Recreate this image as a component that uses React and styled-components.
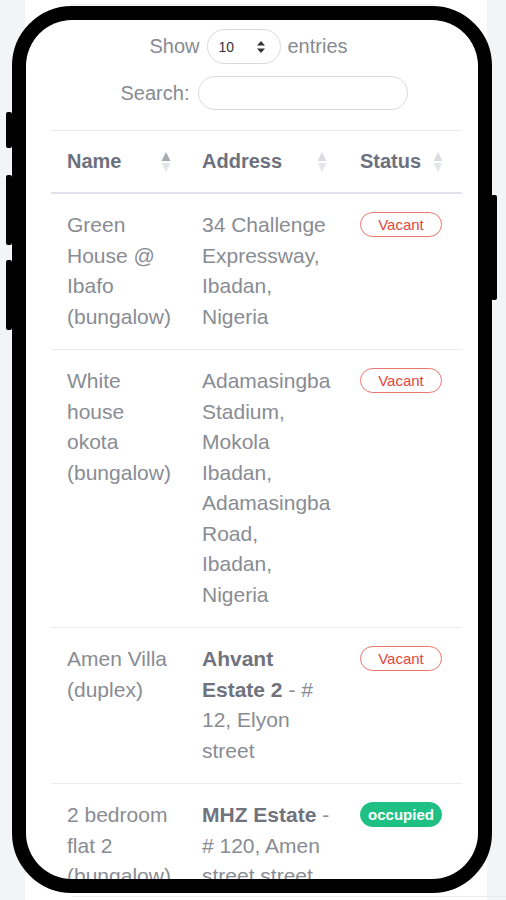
import styled, { createGlobalStyle } from "styled-components";

const GlobalStyle = createGlobalStyle`
  html, body {
    margin: 0;
    padding: 0;
    background: #f3f4f6;
    font-family: "Liberation Sans", Arial, sans-serif;
  }
`;

const rows = [
  {
    name: "Green House @ Ibafo (bungalow)",
    estate: null,
    address: "34 Challenge Expressway, Ibadan, Nigeria",
    status: "vacant",
  },
  {
    name: "White house okota (bungalow)",
    estate: null,
    address: "Adamasingba Stadium, Mokola Ibadan, Adamasingba Road, Ibadan, Nigeria",
    status: "vacant",
  },
  {
    name: "Amen Villa (duplex)",
    estate: "Ahvant Estate 2",
    address: " - # 12, Elyon street",
    status: "vacant",
  },
  {
    name: "2 bedroom flat 2 (bungalow)",
    estate: "MHZ Estate",
    address: " - # 120, Amen street street",
    status: "occupied",
  },
];

function SortIcon({ active }) {
  return (
    <SortSvg width="10" height="22" viewBox="0 0 10 22">
      <path d="M5 1 L9.5 10 L0.5 10 Z" fill={active ? "#a8aab1" : "#dcdde1"} />
      <path d="M5 21 L9.5 12 L0.5 12 Z" fill="#e4e5e8" />
    </SortSvg>
  );
}

export default function App() {
  return (
    <>
      <GlobalStyle />
      <Stage>
        <TopCard />
        <PhoneFrame>
          <SideButton $side="left" $top={92} $h={36} />
          <SideButton $side="left" $top={155} $h={70} />
          <SideButton $side="left" $top={240} $h={70} />
          <SideButton $side="right" $top={175} $h={105} />
          <Screen>
            <Controls>
              <ControlRow $shift={-16}>
                Show
                <SelectBox>
                  10
                  <svg width="10" height="14" viewBox="0 0 10 14">
                    <path d="M5 1 L9 5.5 L1 5.5 Z" fill="#333" />
                    <path d="M5 13 L9 8.5 L1 8.5 Z" fill="#333" />
                  </svg>
                </SelectBox>
                entries
              </ControlRow>
              <ControlRow $shift={16}>
                Search:
                <SearchInput />
              </ControlRow>
            </Controls>
            <Table>
              <colgroup>
                <col style={{ width: 135 }} />
                <col style={{ width: 158 }} />
                <col style={{ width: 118 }} />
              </colgroup>
              <thead>
                <tr>
                  <Th $pr={15}>
                    <HeadInner>
                      Name
                      <SortIcon active />
                    </HeadInner>
                  </Th>
                  <Th $pr={17}>
                    <HeadInner>
                      Address
                      <SortIcon />
                    </HeadInner>
                  </Th>
                  <Th $pr={19}>
                    <HeadInner>
                      Status
                      <SortIcon />
                    </HeadInner>
                  </Th>
                </tr>
              </thead>
              <tbody>
                {rows.map((r) => (
                  <Row key={r.name}>
                    <Td $pr={12}>{r.name}</Td>
                    <Td $pr={13}>
                      {r.estate && <Estate>{r.estate}</Estate>}
                      {r.address}
                    </Td>
                    <Td $pr={8}>
                      <Badge $status={r.status}>
                        {r.status === "vacant" ? "Vacant" : "occupied"}
                      </Badge>
                    </Td>
                  </Row>
                ))}
              </tbody>
            </Table>
          </Screen>
        </PhoneFrame>
        <BottomCard />
      </Stage>
    </>
  );
}

const Stage = styled.div`
  height: 900px;
  overflow: hidden;
  background: linear-gradient(
    to right,
    #f3f4f6 25px,
    #ffffff 25px,
    #ffffff 487px,
    #f3f4f6 487px
  );
`;

const TopCard = styled.div`
  height: 4px;
  margin: 0 71px 0 70px;
  background: #fff;
  border-bottom: 1px solid #ececef;
  box-shadow: 0 1px 2px rgba(0, 0, 0, 0.04);
`;

const PhoneFrame = styled.div`
  position: relative;
  box-sizing: border-box;
  width: 480px;
  height: 887px;
  margin: 1px 0 0 12px;
  border: 14px solid #000;
  border-radius: 60px;
  background: #000;
`;

const SideButton = styled.div`
  position: absolute;
  top: ${(p) => p.$top}px;
  ${(p) => (p.$side === "left" ? "left: -20px;" : "right: -19px;")}
  width: 6px;
  height: ${(p) => p.$h}px;
  background: #000;
  border-radius: 2px;
`;

const Screen = styled.div`
  height: 100%;
  overflow: hidden;
  background: #fff;
  border-radius: 46px;
  padding: 0 16px 0 25px;
`;

const Controls = styled.div`
  display: flex;
  flex-direction: column;
  gap: 12px;
  padding-top: 9px;
`;

const ControlRow = styled.div`
  display: flex;
  align-items: center;
  justify-content: center;
  gap: 7px;
  font-size: 20px;
  color: #878a91;
  padding-left: ${(p) => Math.max(p.$shift, 0)}px;
  padding-right: ${(p) => Math.max(-p.$shift, 0)}px;
`;

const SelectBox = styled.div`
  box-sizing: border-box;
  display: flex;
  align-items: center;
  justify-content: space-between;
  width: 74px;
  height: 35px;
  padding: 0 14px 0 11px;
  border: 1px solid #d9dadf;
  border-radius: 18px;
  font-size: 14px;
  color: #333;
`;

const SearchInput = styled.div`
  box-sizing: border-box;
  width: 210px;
  height: 34px;
  margin-left: 2px;
  border: 1px solid #d9dadf;
  border-radius: 17px;
`;

const Table = styled.table`
  width: 411px;
  margin-top: 20px;
  border-collapse: collapse;
  table-layout: fixed;
  border-top: 1px solid #e9e9ee;
`;

const Th = styled.th`
  height: 61px;
  padding: 0 ${(p) => p.$pr}px 0 16px;
  text-align: left;
  font-size: 20px;
  font-weight: 700;
  color: #6d717e;
  border-bottom: 2px solid #e1e1ee;
`;

const HeadInner = styled.div`
  display: flex;
  align-items: center;
  justify-content: space-between;
`;

const SortSvg = styled.svg`
  flex-shrink: 0;
`;

const Row = styled.tr`
  border-bottom: 1px solid #ebebef;
`;

const Td = styled.td`
  padding: 16px ${(p) => p.$pr}px 17px 16px;
  vertical-align: top;
  font-size: 21px;
  line-height: 30.5px;
  color: #898c93;
`;

const Estate = styled.span`
  font-weight: 700;
  color: #70737d;
`;

const Badge = styled.span`
  display: inline-block;
  box-sizing: border-box;
  width: 82px;
  height: 25px;
  margin-top: 2px;
  border-radius: 13px;
  font-size: 15px;
  line-height: 23px;
  text-align: center;
  vertical-align: top;
  ${(p) =>
    p.$status === "vacant"
      ? "border: 1px solid #e8756d; color: #e0473d; background: #fff;"
      : "border: 1px solid #1ec183; color: #fff; background: #1ec183; font-weight: 700;"}
`;

const BottomCard = styled.div`
  height: 4px;
  margin: 3px 0 0 72px;
  border-top: 1px solid #ececef;
`;
